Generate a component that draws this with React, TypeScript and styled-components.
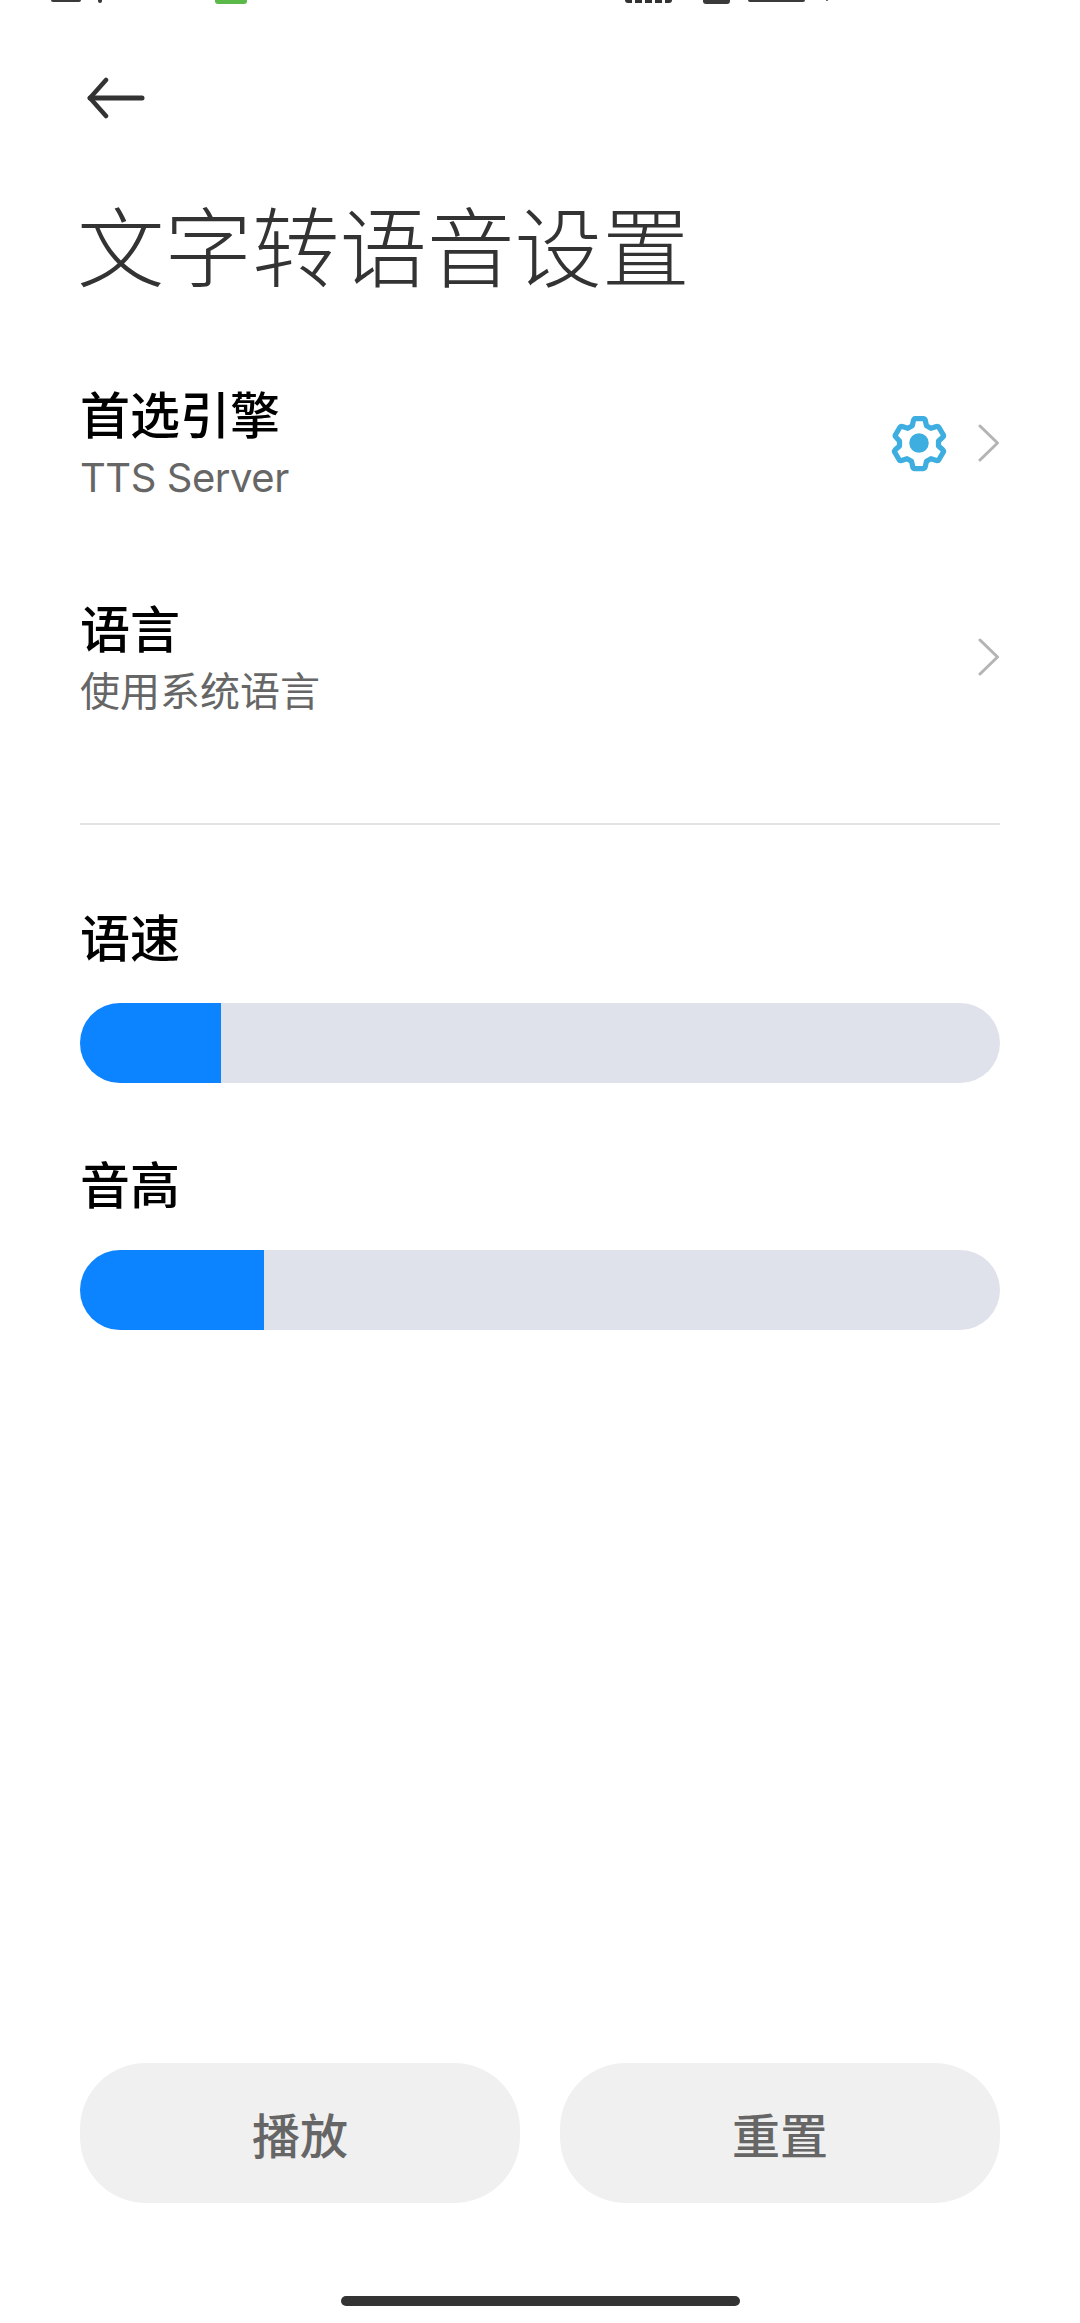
import styled, { createGlobalStyle } from "styled-components";

const GlobalStyle = createGlobalStyle`
  html, body {
    margin: 0;
    padding: 0;
    background: #fff;
  }
  body {
    font-family: "Noto Sans CJK SC", "Noto Sans", sans-serif;
  }
`;

const Page = styled.div`
  width: 1080px;
  height: 2323px;
  display: flex;
  flex-direction: column;
  padding: 0 80px;
  box-sizing: border-box;
  overflow: hidden;
`;

// the status bar is cropped off in the screenshot, only its lower edge shows
const StatusStrip = styled.div`
  display: flex;
  align-items: flex-start;
  height: 5px;
  margin: 0 -80px;
`;

const StatusPiece = styled.div<{ $left: number; $width: number; $height: number; $green?: boolean; $dotted?: boolean }>`
  flex: none;
  margin-left: ${(props) => props.$left}px;
  width: ${(props) => props.$width}px;
  height: ${(props) => props.$height}px;
  border-radius: 0 0 3px 3px;
  background: ${(props) =>
    props.$green
      ? "#5bb94a"
      : props.$dotted
        ? "repeating-linear-gradient(90deg, #333 0 7px, transparent 7px 10px)"
        : "#3a3a3a"};
`;

const BackButton = styled.div`
  margin: 72px 0 0 7px;
  width: 62px;
  height: 42px;
  display: flex;
`;

const Title = styled.h1`
  margin: 80px 0 0 -3px;
  font-size: 87.5px;
  line-height: 88px;
  font-weight: 300;
  color: #333;
`;

const Row = styled.div<{ $top: number }>`
  display: flex;
  align-items: center;
  height: 116px;
  margin-top: ${(props) => props.$top}px;
`;

const RowText = styled.div`
  flex: 1;
  min-width: 0;
`;

const RowTitle = styled.div`
  font-size: 50px;
  line-height: 56px;
  font-weight: 500;
  color: #000;
  margin-bottom: 14px;
`;

const RowSub = styled.div<{ $latin?: boolean }>`
  font-family: Inter, "Noto Sans CJK SC", sans-serif;
  font-size: 40px;
  line-height: 48px;
  letter-spacing: ${(props) => (props.$latin ? "-0.45px" : "0")};
  color: #666;
`;

const RowIcons = styled.div`
  display: flex;
  align-items: center;
  gap: 29px;
`;

const Divider = styled.div`
  height: 2px;
  background: #e2e2e2;
  margin-top: 108px;
`;

const SliderLabel = styled.div<{ $top: number }>`
  font-size: 50px;
  line-height: 56px;
  font-weight: 500;
  color: #000;
  margin-top: ${(props) => props.$top}px;
`;

const Track = styled.div`
  height: 80px;
  border-radius: 40px;
  background: #dfe2eb;
  margin-top: 40px;
  overflow: hidden;
`;

const Fill = styled.div`
  height: 100%;
  background: #0d84ff;
`;

const Actions = styled.div`
  margin-top: auto;
  display: flex;
  gap: 40px;
`;

const ActionButton = styled.button`
  flex: 1;
  height: 140px;
  border: 0;
  border-radius: 66px;
  background: #f0f0f0;
  color: #666;
  font-family: inherit;
  font-size: 48px;
  font-weight: 500;
  padding: 0;
`;

const HomeBar = styled.div`
  align-self: center;
  width: 399px;
  height: 10px;
  border-radius: 5px;
  background: #333;
  margin: 93px 0 17px;
`;

const Chevron = () => (
  <svg width="22" height="38" viewBox="0 0 22 38" fill="none">
    <path d="M2 2 L19.500 19 L2 36" stroke="#b4b4b4" strokeWidth="3" strokeLinecap="round" strokeLinejoin="round" />
  </svg>
);

const Gear = () => (
  <svg width="60" height="60" viewBox="0 0 24 24" fill="none">
    <path
      d="M10.300 2.200h3.400c.4 0 .7.300.8.700l.5 2.200 1.800 1 2.200-.7c.4-.1.800 0 1 .4l1.700 2.900c.2.300.1.700-.2 1l-1.700 1.500v2l1.700 1.500c.3.300.4.700.2 1l-1.700 2.900c-.2.400-.6.500-1 .4l-2.200-.7-1.800 1-.5 2.200c-.1.400-.4.700-.8.700h-3.400c-.4 0-.7-.3-.8-.7l-.5-2.200-1.800-1-2.200.7c-.4.100-.8 0-1-.4l-1.700-2.900c-.2-.3-.1-.7.2-1l1.700-1.500v-2L2.800 9.700c-.3-.3-.4-.7-.2-1l1.700-2.900c.2-.4.600-.5 1-.4l2.200.7 1.800-1 .5-2.200c.1-.4.400-.7.800-.7z"
      stroke="#3eaee0"
      strokeWidth="2.100"
      strokeLinejoin="round"
    />
    <circle cx="12" cy="12" r="3.900" fill="#3eaee0" />
  </svg>
);

export default function App() {
  return (
    <>
      <GlobalStyle />
      <Page>
        <StatusStrip>
          <StatusPiece $left={51} $width={30} $height={2} />
          <StatusPiece $left={17} $width={4} $height={3} />
          <StatusPiece $left={113} $width={32} $height={4} $green />
          <StatusPiece $left={378} $width={47} $height={3} $dotted />
          <StatusPiece $left={31} $width={27} $height={4} />
          <StatusPiece $left={18} $width={57} $height={2} />
          <StatusPiece $left={21} $width={2} $height={1} />
        </StatusStrip>
        <BackButton>
          <svg width="62" height="42" viewBox="0 0 62 42" fill="none">
            <path d="M19 3 L3 21 L19 39" stroke="#333" strokeWidth="4.500" strokeLinecap="round" strokeLinejoin="round" />
            <path d="M3 21 H55" stroke="#333" strokeWidth="5" strokeLinecap="round" />
          </svg>
        </BackButton>
        <Title>文字转语音设置</Title>
        <Row $top={98}>
          <RowText>
            <RowTitle>首选引擎</RowTitle>
            <RowSub $latin>TTS Server</RowSub>
          </RowText>
          <RowIcons>
            <Gear />
            <Chevron />
          </RowIcons>
        </Row>
        <Row $top={98}>
          <RowText>
            <RowTitle>语言</RowTitle>
            <RowSub>使用系统语言</RowSub>
          </RowText>
          <RowIcons>
            <Chevron />
          </RowIcons>
        </Row>
        <Divider />
        <SliderLabel $top={82}>语速</SliderLabel>
        <Track>
          <Fill style={{ width: "15.3%" }} />
        </Track>
        <SliderLabel $top={71}>音高</SliderLabel>
        <Track>
          <Fill style={{ width: "20%" }} />
        </Track>
        <Actions>
          <ActionButton>播放</ActionButton>
          <ActionButton>重置</ActionButton>
        </Actions>
        <HomeBar />
      </Page>
    </>
  );
}
